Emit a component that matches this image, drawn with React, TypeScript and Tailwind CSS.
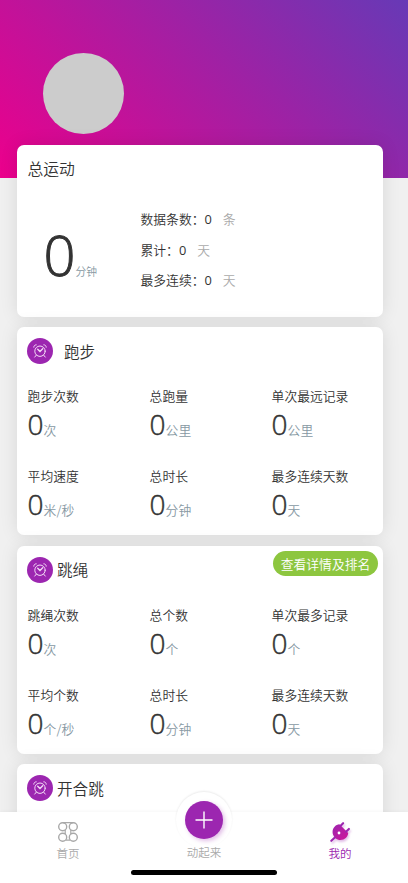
import { clsx } from 'clsx';

type Stat = { label: string; value: number; unit: string };

const runStats: Stat[] = [
  { label: '跑步次数', value: 0, unit: '次' },
  { label: '总跑量', value: 0, unit: '公里' },
  { label: '单次最远记录', value: 0, unit: '公里' },
  { label: '平均速度', value: 0, unit: '米/秒' },
  { label: '总时长', value: 0, unit: '分钟' },
  { label: '最多连续天数', value: 0, unit: '天' },
];

const ropeStats: Stat[] = [
  { label: '跳绳次数', value: 0, unit: '次' },
  { label: '总个数', value: 0, unit: '个' },
  { label: '单次最多记录', value: 0, unit: '个' },
  { label: '平均个数', value: 0, unit: '个/秒' },
  { label: '总时长', value: 0, unit: '分钟' },
  { label: '最多连续天数', value: 0, unit: '天' },
];

const totals: Stat[] = [
  { label: '数据条数', value: 0, unit: '条' },
  { label: '累计', value: 0, unit: '天' },
  { label: '最多连续', value: 0, unit: '天' },
];

const CARD = 'rounded-[7px] bg-white shadow-[0_0_18px_rgba(0,0,0,0.1)]';

const ClockIcon = () => (
  <span className="-mt-px flex h-[26px] w-[26px] shrink-0 items-center justify-center rounded-full bg-[#9c26b0]">
    <svg width="14" height="14" viewBox="0 0 14 14" fill="none" stroke="#f4dcf7" strokeWidth="1" strokeLinecap="round">
      <circle cx="7" cy="7.2" r="5.2" />
      <path d="M4.7 5.3 7 7.5l2.7-2.7" strokeWidth="1.3" />
      <path d="M.8 3.2C.8 1.8 1.8.8 3.2.8M13.2 3.2c0-1.4-1-2.4-2.4-2.4M3.3 11.2l-1.6 1.9M10.7 11.2l1.6 1.9" />
    </svg>
  </span>
);

const HomeIcon = () => (
  <svg width="22" height="22" viewBox="0 0 22 22" fill="none" stroke="#a8a8a8" strokeWidth="1.4">
    <circle cx="5.7" cy="5.7" r="4" />
    <circle cx="16.3" cy="5.7" r="4" />
    <circle cx="5.7" cy="16.3" r="4" />
    <circle cx="16.3" cy="16.3" r="4" />
    <path d="M6 1.7h10M9 19.2h4M8.2 8.8v4.4M13.8 8.8v4.4" strokeWidth="1.2" />
  </svg>
);

const PlugIcon = () => (
  <svg className="drop-shadow-[1px_2px_1px_rgba(156,38,176,0.3)]" width="20" height="20" viewBox="0 0 20 20">
    <defs>
      <linearGradient id="plug" x1="0" y1="0" x2="1" y2="1">
        <stop offset="0" stopColor="#9c26b0" />
        <stop offset="1" stopColor="#d01498" />
      </linearGradient>
    </defs>
    <path
      d="M9.4 2.2 18.2 11c-.4 4-3.5 6.9-7.7 7-2 0-3.7-.6-5-1.8-2.2-2-3.2-4.4-2.9-7.1C3.1 5.3 5.8 2.6 9.4 2.2Z"
      fill="url(#plug)"
    />
    <path d="m10.4 4 2.7-2.8M16 9.8l2.9-2.9M4.9 15.5l-3.6 3.3" stroke="#9c26b0" strokeWidth="2.1" strokeLinecap="round" />
    <circle cx="9" cy="11" r="1.4" fill="#fff" />
  </svg>
);

const StatGrid = ({ stats }: { stats: Stat[] }) => (
  <div className="-mr-[11px] ml-[0.6px] grid grid-cols-[repeat(3,122px)] gap-y-[15px] pt-[10px]">
    {stats.map((s) => (
      <div key={s.label} className="h-[65px] whitespace-nowrap">
        <div className="text-[12.8px] leading-5">{s.label}</div>
        <div className="-mt-px flex items-baseline leading-[38px]">
          <span className="font-['Open_Sans',sans-serif] text-[28px] font-light [-webkit-text-stroke:0.5px_#333]">{s.value}</span>
          <span className="text-[12.8px] text-[#8799a3]">{s.unit}</span>
        </div>
      </div>
    ))}
  </div>
);

type SportCardProps = {
  title: string;
  stats?: Stat[];
  wide?: boolean;
  action?: string;
};

const SportCard = ({ title, stats, wide, action }: SportCardProps) => (
  <section className={clsx(CARD, 'h-[208px] pl-[10px]')}>
    <div className="flex h-[49px] items-center">
      <ClockIcon />
      <h2 className={clsx('-mt-[2px] text-[15.6px] leading-6', wide ? 'ml-[11px]' : 'ml-[4px]')}>{title}</h2>
      {action && (
        <button className="mr-[5px] mb-[13px] ml-auto h-[25px] w-[105px] rounded-full bg-[#8dc63f] text-[12.8px] leading-[24px] text-white">
          {action}
        </button>
      )}
    </div>
    {stats && <StatGrid stats={stats} />}
  </section>
);

const TabBar = () => (
  <nav className="absolute inset-x-0 bottom-0 h-[71px] bg-white text-[11.5px] leading-4 text-[#aaa] shadow-[0_-1px_3px_rgba(0,0,0,0.03)]">
    <div className="grid h-[58px] grid-cols-3">
      <a className="flex flex-col items-center pt-[9px]">
        <HomeIcon />
        <span className="mt-[2px]">首页</span>
      </a>
      <a className="-mt-5 flex flex-col items-center">
        <span className="flex h-[56px] w-[56px] items-center justify-center rounded-full bg-white shadow-[0_-1px_2px_rgba(0,0,0,0.08)]">
          <span className="flex h-[38px] w-[38px] items-center justify-center rounded-full bg-[#9c26b0] shadow-[2px_2px_4px_rgba(156,38,176,0.3)]">
            <svg width="18" height="18" viewBox="0 0 18 18" stroke="#fff" strokeWidth="1.4">
              <path d="M9 .5v17M.5 9h17" />
            </svg>
          </span>
        </span>
        <span className="-mt-[4px]">动起来</span>
      </a>
      <a className="flex flex-col items-center pt-[10px] text-[#9c26b0]">
        <PlugIcon />
        <span className="mt-[3px]">我的</span>
      </a>
    </div>
    {/* Home indicator */}
    <div className="mx-auto h-[5px] w-[146px] rounded-full bg-black" />
  </nav>
);

export default function App() {
  return (
    <div className="relative h-[883px] w-[408px] overflow-hidden bg-[#f0f0f0] font-['Noto_Sans_CJK_SC',sans-serif] font-[350] text-[#333]">
      <header className="h-[178px] bg-[linear-gradient(45deg,#ec008c,#6739b6)] pt-[53px] pl-[42.5px]">
        <div className="h-[81px] w-[81px] rounded-full bg-[#ccc]" />
      </header>

      <main className="-mt-[33px] ml-[17px] flex w-[366px] flex-col gap-[10.6px]">
        <section className={clsx(CARD, 'h-[171.5px] px-[10.5px] pt-[12px]')}>
          <h2 className="text-[15.8px] leading-6">总运动</h2>
          <div className="mt-[23px] flex">
            <div className="flex w-[113px] items-baseline pl-[16px]">
              <span className="font-['Open_Sans',sans-serif] text-[56px] leading-[100px] font-light [-webkit-text-stroke:1px_#333]">{0}</span>
              <span className="text-[10.8px] text-[#8799a3]">分钟</span>
            </div>
            <ul className="text-[12.8px] leading-[30.5px]">
              {totals.map((t) => (
                <li key={t.label}>
                  {t.label}：<span className="font-['Open_Sans',sans-serif] font-normal">{t.value}</span>
                  <span className="ml-[11px] text-[#aaa]">{t.unit}</span>
                </li>
              ))}
            </ul>
          </div>
        </section>

        <SportCard title="跑步" stats={runStats} wide />
        <SportCard title="跳绳" stats={ropeStats} action="查看详情及排名" />
        <SportCard title="开合跳" />
      </main>

      <TabBar />
    </div>
  );
}
